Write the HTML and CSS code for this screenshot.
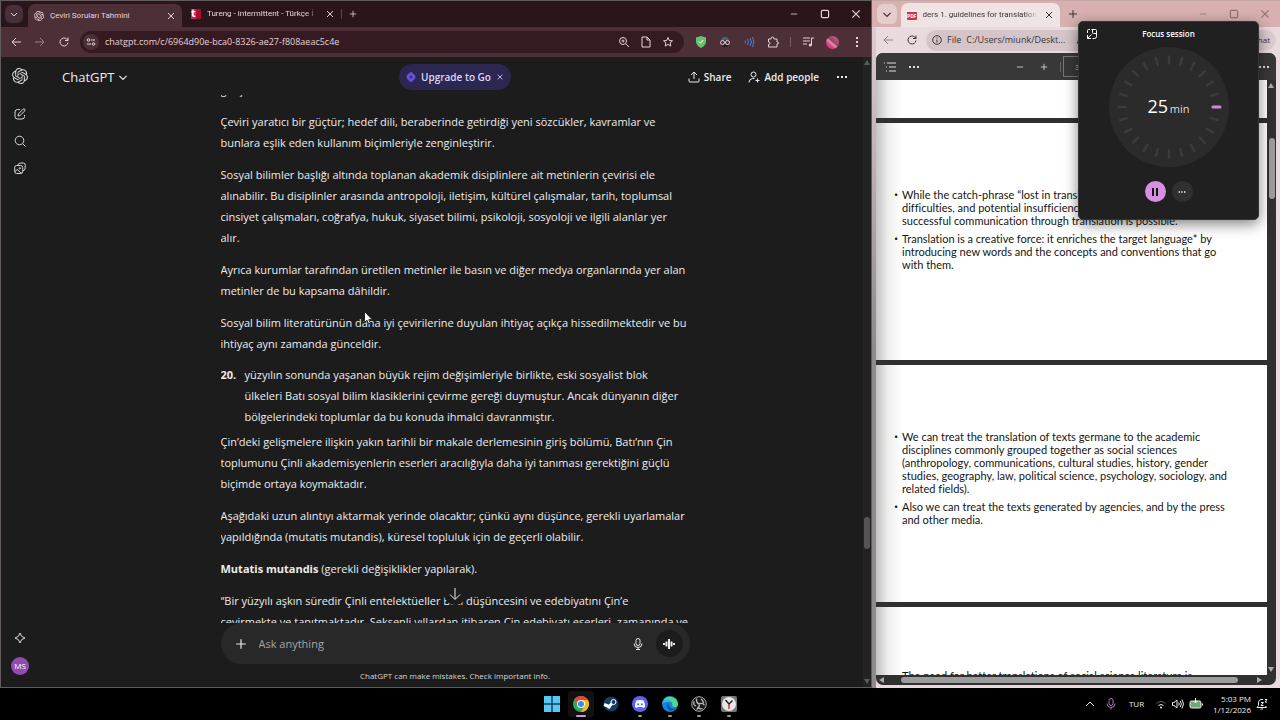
FILE: index.html
```html
<!DOCTYPE html>
<html lang="tr">
<head>
    <meta charset="UTF-8">
    <meta name="viewport" content="width=device-width, initial-scale=1.0">
    <title>Çeviri Soruları Tahmini</title>
    <link rel="stylesheet" href="styles.css">
</head>
<body>
    <svg class="sprite" aria-hidden="true">
        <symbol id="openai" viewBox="0 0 24 24">
            <path fill="currentColor" d="M22.2819 9.8211a5.9847 5.9847 0 0 0-.5157-4.9108 6.0462 6.0462 0 0 0-6.5098-2.9A6.0651 6.0651 0 0 0 4.9807 4.1818a5.9847 5.9847 0 0 0-3.9977 2.9 6.0462 6.0462 0 0 0 .7427 7.0966 5.98 5.98 0 0 0 .511 4.9107 6.051 6.051 0 0 0 6.5146 2.9001A5.9847 5.9847 0 0 0 13.2599 24a6.0557 6.0557 0 0 0 5.7718-4.2058 5.9894 5.9894 0 0 0 3.9977-2.9001 6.0557 6.0557 0 0 0-.7475-7.0729zm-9.022 12.6081a4.4755 4.4755 0 0 1-2.8764-1.0408l.1419-.0804 4.7783-2.7582a.7948.7948 0 0 0 .3927-.6813v-6.7369l2.02 1.1686a.071.071 0 0 1 .038.052v5.5826a4.504 4.504 0 0 1-4.4945 4.4944zm-9.6607-4.1254a4.4708 4.4708 0 0 1-.5346-3.0137l.142.0852 4.783 2.7582a.7712.7712 0 0 0 .7806 0l5.8428-3.3685v2.3324a.0804.0804 0 0 1-.0332.0615L9.74 19.9502a4.4992 4.4992 0 0 1-6.1408-1.6464zM2.3408 7.8956a4.485 4.485 0 0 1 2.3655-1.9728V11.6a.7664.7664 0 0 0 .3879.6765l5.8144 3.3543-2.0201 1.1685a.0757.0757 0 0 1-.071 0l-4.8303-2.7865A4.504 4.504 0 0 1 2.3408 7.872zm16.5963 3.8558L13.1038 8.364 15.1192 7.2a.0757.0757 0 0 1 .071 0l4.8303 2.7913a4.4944 4.4944 0 0 1-.6765 8.1042v-5.6772a.79.79 0 0 0-.407-.667zm2.0107-3.0231l-.142-.0852-4.7735-2.7818a.7759.7759 0 0 0-.7854 0L9.409 9.2297V6.8974a.0662.0662 0 0 1 .0284-.0615l4.8303-2.7866a4.4992 4.4992 0 0 1 6.6802 4.66zM8.3065 12.863l-2.02-1.1638a.0804.0804 0 0 1-.038-.0567V6.0742a4.4992 4.4992 0 0 1 7.3757-3.4537l-.142.0805L8.704 5.459a.7948.7948 0 0 0-.3927.6813zm1.0976-2.3654l2.602-1.4998 2.6069 1.4998v2.9994l-2.5974 1.4997-2.6067-1.4997Z"/>
        </symbol>
        <symbol id="x" viewBox="0 0 10 10"><path d="M2 2l6 6M8 2l-6 6"/></symbol>
        <symbol id="plus" viewBox="0 0 10 10"><path d="M5 1v8M1 5h8"/></symbol>
        <symbol id="minus" viewBox="0 0 10 10"><path d="M1 5h8"/></symbol>
        <symbol id="square" viewBox="0 0 10 10"><rect x="2" y="2" width="6" height="6" rx="1"/></symbol>
        <symbol id="down" viewBox="0 0 10 10"><path d="M2 4l3 3 3-3"/></symbol>
        <symbol id="back" viewBox="0 0 12 12"><path d="M11 6H2M6 2L2 6l4 4"/></symbol>
        <symbol id="reload" viewBox="0 0 12 12"><path d="M10 6.500a4 4 0 1 1-1.200-3.400L10 4.300M10 1.500v3H7"/></symbol>
        <symbol id="dots" viewBox="0 0 12 12"><path class="solid" d="M1 5h2v2H1zM5 5h2v2H5zM9 5h2v2H9z"/></symbol>
    </svg>

    <main class="desktop">
        <section class="window chrome">
            <div class="tabs">
                <button class="tab-search" aria-label="Search tabs"><svg class="icon s10"><use href="#down"/></svg></button>
                <div class="tab active">
                    <svg class="icon s10"><use href="#openai"/></svg>
                    <span class="tab-title">Çeviri Soruları Tahmini</span>
                    <button aria-label="Close tab"><svg class="icon s10"><use href="#x"/></svg></button>
                </div>
                <div class="tab second">
                    <span class="tureng">t</span>
                    <span class="tab-title faded">Tureng - intermittent - Türkçe İ</span>
                    <button aria-label="Close tab"><svg class="icon s10"><use href="#x"/></svg></button>
                </div>
                <button class="new-tab" aria-label="New tab"><svg class="icon s8"><use href="#plus"/></svg></button>
                <div class="window-buttons">
                    <button aria-label="Minimize"><svg class="icon s8"><use href="#minus"/></svg></button>
                    <button aria-label="Maximize"><svg class="icon s12"><use href="#square"/></svg></button>
                    <button aria-label="Close"><svg class="icon s12"><use href="#x"/></svg></button>
                </div>
            </div>
            <div class="toolbar">
                <button aria-label="Back"><svg class="icon s12"><use href="#back"/></svg></button>
                <button class="forward" aria-label="Forward"><svg class="icon s12" viewBox="0 0 12 12"><path d="M1 6h9M6 2l4 4-4 4"/></svg></button>
                <button aria-label="Reload"><svg class="icon s12"><use href="#reload"/></svg></button>
                <div class="address">
                    <button class="site-info" aria-label="Site information">
                        <svg class="icon s10" viewBox="0 0 10 10"><circle cx="2.500" cy="3" r="1.300"/><path d="M5 3h4M1 7h4"/><circle cx="7.500" cy="7" r="1.300"/></svg>
                    </button>
                    <input type="text" aria-label="Address" value="chatgpt.com/c/6964d90e-bca0-8326-ae27-f808aeac5c4e">
                    <button aria-label="Zoom"><svg class="icon s12" viewBox="0 0 12 12"><circle cx="5" cy="5" r="3.500"/><path d="M8 8l3 3M5 3.500v3M3.500 5h3"/></svg></button>
                    <button aria-label="Page"><svg class="icon s12" viewBox="0 0 12 12"><path d="M2 1h5l3 3v7H2zM7 1v3h3"/></svg></button>
                    <button aria-label="Bookmark"><svg class="icon s12" viewBox="0 0 12 12"><path d="M6 1.500l1.300 3 3.200.300-2.400 2.100.700 3.200L6 8.400l-2.800 1.700.700-3.200-2.400-2.100 3.200-.300z"/></svg></button>
                </div>
                <div class="extensions">
                    <svg class="icon s12" viewBox="0 0 12 12"><path class="shield" d="M6 0l5 1.500v4C11 9 8 11 6 12 4 11 1 9 1 5.500v-4z"/><path class="tick" d="M4 5.500l1.500 1.600L8.200 4"/></svg>
                    <svg class="icon s12" viewBox="0 0 12 12"><path class="hat" d="M2 4l2-3h4l2 3z"/><circle cx="3.500" cy="6.500" r="2"/><circle cx="8.500" cy="6.500" r="2"/><path class="beard" d="M3 9h6l-1 2H4z"/></svg>
                    <svg class="icon s12 blue" viewBox="0 0 12 12"><path d="M2 4.500q1 1.500 0 3M4.500 3q2 3 0 6M7 2q3 4 0 8M9.500 1q3 5 0 10"/></svg>
                    <svg class="icon s12" viewBox="0 0 12 12"><path d="M1.500 3H4q0-2 1.500-2T7 3h3v3q1.500 0 1.500 1T10 8v3H1.500V8.500q1.500 0 1.500-1.300T1.500 6z"/></svg>
                    <i class="divider"></i>
                    <svg class="icon s12" viewBox="0 0 12 12"><path d="M1 2h7M1 5h7M1 8h4M9.500 2v7M9.500 2H12"/><circle class="solid" cx="8.300" cy="9" r="1.500"/></svg>
                    <span class="chrome-avatar"></span>
                    <svg class="icon s12" viewBox="0 0 12 12"><path class="solid" d="M5 1h2v2H5zM5 5h2v2H5zM5 9h2v2H5z"/></svg>
                </div>
            </div>

            <div class="chat">
                <nav class="rail">
                    <a href="#" aria-label="Home"><svg class="icon s16"><use href="#openai"/></svg></a>
                    <a class="rail-first" href="#" aria-label="New chat"><svg class="icon s12" viewBox="0 0 12 12"><path d="M6 1.500H3.500Q1 1.500 1 4v4.500Q1 11 3.500 11H8q2.500 0 2.500-2.500V7M4 8l.500-2.200L9 1.200q1-.700 1.700 0 .700.800 0 1.700L6.200 7.500z"/></svg></a>
                    <a href="#" aria-label="Search chats"><svg class="icon s12" viewBox="0 0 12 12"><circle cx="5.500" cy="5.500" r="4.300"/><path d="M8.700 8.700l2.800 2.800"/></svg></a>
                    <a href="#" aria-label="Images"><svg class="icon s12" viewBox="0 0 12 12"><rect x=".700" y="3.500" width="8" height="8" rx="2"/><path d="M4 3.500V3q.300-2 2.500-2L9.300 1q2.200.200 2 2.500L11 7q-.300 1.500-2 1.700M1 9.500l2.200-2 4.500 4"/><circle cx="5.800" cy="6.300" r=".700"/></svg></a>
                    <a class="sparkle" href="#" aria-label="Upgrade"><svg class="icon s12" viewBox="0 0 12 12"><path d="M6 1q.800 4.200 5 5-4.200.800-5 5-.800-4.200-5-5 4.200-.800 5-5z"/></svg></a>
                    <a class="avatar" href="#">MS</a>
                </nav>

                <div class="conversation">
                    <header class="chat-header">
                        <button class="model">ChatGPT <svg class="icon s12"><use href="#down"/></svg></button>
                        <button class="upgrade">
                            <svg class="icon s10" viewBox="0 0 10 10"><path class="gem" d="M5 0q1 0 4 3.500 1 1.500 0 3Q6 10 5 10T1 6.500q-1-1.500 0-3Q4 0 5 0z"/><circle class="gem-core" cx="5" cy="5" r="1.500"/></svg>
                            Upgrade to Go
                            <svg class="icon s8"><use href="#x"/></svg>
                        </button>
                        <div class="chat-actions">
                            <button><svg class="icon s12" viewBox="0 0 12 12"><path d="M6 8V1M3 4l3-3 3 3M1 7.500V10q0 1 1 1h8q1 0 1-1V7.500"/></svg>Share</button>
                            <button><svg class="icon s12" viewBox="0 0 12 12"><circle cx="5.500" cy="3.500" r="2.500"/><path d="M1 11.500q0-3.500 3.500-4h2M9.500 7.500v4M7.500 9.500h4"/></svg>Add people</button>
                            <button aria-label="More"><svg class="icon s12"><use href="#dots"/></svg></button>
                        </div>
                    </header>

                    <div class="thread">
                        <article class="message">
                            <p>geliş</p>
                            <p>Çeviri yaratıcı bir güçtür; hedef dili, beraberinde getirdiği yeni sözcükler, kavramlar ve<br>bunlara eşlik eden kullanım biçimleriyle zenginleştirir.</p>
                            <p>Sosyal bilimler başlığı altında toplanan akademik disiplinlere ait metinlerin çevirisi ele<br>alınabilir. Bu disiplinler arasında antropoloji, iletişim, kültürel çalışmalar, tarih, toplumsal<br>cinsiyet çalışmaları, coğrafya, hukuk, siyaset bilimi, psikoloji, sosyoloji ve ilgili alanlar yer<br>alır.</p>
                            <p>Ayrıca kurumlar tarafından üretilen metinler ile basın ve diğer medya organlarında yer alan<br>metinler de bu kapsama dâhildir.</p>
                            <p>Sosyal bilim literatürünün daha iyi çevirilerine duyulan ihtiyaç açıkça hissedilmektedir ve bu<br>ihtiyaç aynı zamanda günceldir.</p>
                            <ol>
                                <li><b>20.</b><span>yüzyılın sonunda yaşanan büyük rejim değişimleriyle birlikte, eski sosyalist blok<br>ülkeleri Batı sosyal bilim klasiklerini çevirme gereği duymuştur. Ancak dünyanın diğer<br>bölgelerindeki toplumlar da bu konuda ihmalci davranmıştır.</span></li>
                            </ol>
                            <p>Çin’deki gelişmelere ilişkin yakın tarihli bir makale derlemesinin giriş bölümü, Batı’nın Çin<br>toplumunu Çinli akademisyenlerin eserleri aracılığıyla daha iyi tanıması gerektiğini güçlü<br>biçimde ortaya koymaktadır.</p>
                            <p>Aşağıdaki uzun alıntıyı aktarmak yerinde olacaktır; çünkü aynı düşünce, gerekli uyarlamalar<br>yapıldığında (mutatis mutandis), küresel topluluk için de geçerli olabilir.</p>
                            <p><b>Mutatis mutandis</b> (gerekli değişiklikler yapılarak).</p>
                            <p>“Bir yüzyılı aşkın süredir Çinli entelektüeller Batı düşüncesini ve edebiyatını Çin’e<br>çevirmekte ve tanıtmaktadır. Seksenli yıllardan itibaren Çin edebiyatı eserleri, zamanında ve</p>
                        </article>
                        <button class="to-bottom" aria-label="Scroll to bottom"><svg class="icon s12" viewBox="0 0 12 12"><path d="M6 0v11M1 6.500l5 5 5-5"/></svg></button>
                    </div>

                    <form class="composer">
                        <button type="button" aria-label="Attach"><svg class="icon s12"><use href="#plus"/></svg></button>
                        <input type="text" placeholder="Ask anything" aria-label="Ask anything">
                        <button type="button" aria-label="Dictate"><svg class="icon s12" viewBox="0 0 12 12"><rect x="4" y="0.500" width="4" height="7" rx="2"/><path d="M2 5.500q0 4 4 4t4-4M6 9.500v2M4 11.500h4"/></svg></button>
                        <button type="button" class="voice" aria-label="Voice mode"><svg class="icon s12 thick" viewBox="0 0 12 12"><path d="M1 5v2M3.500 3.500v5M6 1v10M8.500 3.500v5M11 5v2"/></svg></button>
                    </form>
                    <p class="disclaimer">ChatGPT can make mistakes. Check important info.</p>
                </div>
                <div class="chat-scroll"><i class="arrow-up"></i><i class="thumb"></i><i class="arrow-down"></i></div>
            </div>
        </section>

        <section class="window edge" lang="en">
            <div class="tabs">
                <button class="tab-search" aria-label="Tab actions"><svg class="icon s12"><use href="#down"/></svg></button>
                <div class="tab active">
                    <span class="pdf-icon">PDF</span>
                    <span class="tab-title faded">ders 1. guidelines for translation of</span>
                    <button aria-label="Close tab"><svg class="icon s10"><use href="#x"/></svg></button>
                </div>
                <button class="new-tab" aria-label="New tab"><svg class="icon s10"><use href="#plus"/></svg></button>
                <div class="window-buttons">
                    <button aria-label="Minimize"><svg class="icon s8"><use href="#minus"/></svg></button>
                    <button aria-label="Maximize"><svg class="icon s12"><use href="#square"/></svg></button>
                    <button aria-label="Close"><svg class="icon s12"><use href="#x"/></svg></button>
                </div>
            </div>
            <div class="toolbar">
                <button class="forward" aria-label="Back"><svg class="icon s12"><use href="#back"/></svg></button>
                <button aria-label="Reload"><svg class="icon s12"><use href="#reload"/></svg></button>
                <div class="address">
                    <svg class="icon s10" viewBox="0 0 10 10"><circle cx="5" cy="5" r="4.300"/><path d="M5 4.500v3M5 2.500v1"/></svg>
                    <span>File</span>
                    <input type="text" aria-label="Address" value="C:/Users/miunk/Deskt...">
                    <svg class="icon s12" viewBox="0 0 12 12"><path d="M2 9q1.500-1 1.500-4Q4 1.500 7 1.500T10.500 5M2 9h5"/></svg>
                </div>
                <button class="copilot">Chat</button>
            </div>
            <div class="pdf-viewer">
                <div class="pdf-bar">
                    <button aria-label="Contents"><svg class="icon s12" viewBox="0 0 12 12"><path d="M0 2h1M3 2h9M2 6h1M5 6h7M2 10h1M5 10h7"/></svg></button>
                    <button aria-label="More"><svg class="icon s12"><use href="#dots"/></svg></button>
                    <button class="zoom-out" aria-label="Zoom out"><svg class="icon s8"><use href="#minus"/></svg></button>
                    <button aria-label="Zoom in"><svg class="icon s8"><use href="#plus"/></svg></button>
                    <i class="divider"></i>
                    <input type="text" class="page-number" aria-label="Page" value="3">
                    <button class="bar-more" aria-label="Settings"><svg class="icon s12"><use href="#dots"/></svg></button>
                </div>
                <div class="pdf-body">
                    <div class="pages">
                        <div class="page"></div>
                        <div class="page">
                            <ul>
                                <li>While the catch-phrase “lost in translation” reflects the<br>difficulties, and potential insufficiencies of translation,<br>successful communication through translation is possible.</li>
                                <li>Translation is a creative force: it enriches the target language* by<br>introducing new words and the concepts and conventions that go<br>with them.</li>
                            </ul>
                        </div>
                        <div class="page">
                            <ul>
                                <li>We can treat the translation of texts germane to the academic<br>disciplines commonly grouped together as social sciences<br>(anthropology, communications, cultural studies, history, gender<br>studies, geography, law, political science, psychology, sociology, and<br>related fields).</li>
                                <li>Also we can treat the texts generated by agencies, and by the press<br>and other media.</li>
                            </ul>
                        </div>
                        <div class="page">
                            <ul>
                                <li class="plain">The need for better translations of social science literature is</li>
                            </ul>
                        </div>
                    </div>
                    <div class="v-scroll"><i class="arrow-up"></i><i class="thumb"></i><i class="arrow-down"></i></div>
                </div>
                <div class="h-scroll"><i class="arrow-left"></i><i class="thumb"></i><i class="arrow-right"></i></div>
            </div>
        </section>

        <aside class="focus" lang="en">
            <button class="shrink" aria-label="Back to full view"><svg class="icon s12" viewBox="0 0 12 12"><path d="M4 1.500H2.500q-1 0-1 1V5M5.500 1.500h4q1 0 1 1v6q0 2-2 2h-2M6.500 1.500v3q0 1 1 1h3M5.500 6.500l-4 4M1.500 7v3.500H5"/></svg></button>
            <h2>Focus session</h2>
            <div class="dial">
                <svg class="dial-ring" viewBox="0 0 120 120">
                    <circle class="face" cx="60" cy="60" r="60"/>
                    <circle class="ticks" cx="60" cy="60" r="47" pathLength="360"/>
                    <path class="hand" d="M104 60h7"/>
                </svg>
                <p><b>25</b> min</p>
            </div>
            <div class="focus-buttons">
                <button class="pause" aria-label="Pause"><svg class="icon s10" viewBox="0 0 10 10"><path class="solid" d="M2 1h2v8H2zM6 1h2v8H6z"/></svg></button>
                <button aria-label="More options"><svg class="icon s8" viewBox="0 0 12 12"><use href="#dots"/></svg></button>
            </div>
        </aside>
    </main>

    <footer class="taskbar" lang="en">
        <div class="apps">
            <button aria-label="Start"><svg viewBox="0 0 16 16"><path fill="#55c8f7" d="M0 0h7.500v7.500H0zM8.500 0H16v7.500H8.500zM0 8.500h7.500V16H0zM8.500 8.500H16V16H8.500z"/></svg></button>
            <button class="current" aria-label="Chrome"><svg viewBox="0 0 16 16"><circle cx="8" cy="8" r="8" fill="#34a853"/><path fill="#ea4335" d="M8 8L1.100 4A8 8 0 0 1 14.900 4z"/><path fill="#fbbc05" d="M8 4h6.900A8 8 0 0 1 8 16l3.500-6z"/><circle cx="8" cy="8" r="4" fill="#fff"/><circle cx="8" cy="8" r="3" fill="#4285f4"/></svg></button>
            <button aria-label="Steam"><svg viewBox="0 0 16 16"><circle cx="8" cy="8" r="7.500" fill="#153c63"/><path fill="none" stroke="#fff" stroke-width="3" d="M1 8.500l5 2 4-4"/><circle cx="10.500" cy="6" r="2.500" fill="#153c63" stroke="#fff"/><circle cx="6" cy="11" r="1.700" fill="#fff"/></svg></button>
            <button class="open" aria-label="Discord"><svg viewBox="0 0 16 16"><circle cx="8" cy="8" r="8" fill="#5865f2"/><path fill="#fff" d="M4.500 4.500q3.500-1 7 0Q13.500 8 13 11l-2 1-1-1.300q-2 .500-4 0L5 12l-2-1q-.500-3 1.500-6.500z"/><circle cx="6.200" cy="8.300" r="1.100" fill="#5865f2"/><circle cx="9.800" cy="8.300" r="1.100" fill="#5865f2"/></svg></button>
            <button class="open" aria-label="Edge"><svg viewBox="0 0 16 16"><circle cx="8" cy="8" r="8" fill="#1684d8"/><path fill="#4fd88b" d="M1 5a8 8 0 0 1 15 3q0 3.500-4 3-2.500-.300-1.500-2Q10 4 5 4 2.500 4 1 5z"/><path fill="#35b8e0" d="M0 8q1-5 6-4.500Q10 4 10.500 7 5 4 0 8z"/><path fill="#0c4f9e" d="M6 7q-2.500 5 2 7.500 3.500.500 6-2Q7 14 6 7z"/></svg></button>
            <button class="open" aria-label="OBS Studio"><svg viewBox="0 0 16 16"><circle cx="8" cy="8" r="7.300" fill="#1b1b1d" stroke="#aaa"/><g fill="none" stroke="#bbb" stroke-width="1.300"><path d="M5.500 2.500q-.500 4 2.500 5.500M13.500 9q-3-2.500-5.500-1M5.500 13.500Q9 11.500 8 8M3 5.500Q2 9 5 10M10 3q3 2 2 5M11.500 12.500q-3 1-5-1.500"/></g></svg></button>
            <button class="open" aria-label="Clock"><svg viewBox="0 0 16 16"><rect width="16" height="16" rx="2" fill="#777"/><circle cx="8" cy="8" r="7" fill="#e8e8e8"/><path fill="none" stroke="#222" stroke-width="1.500" d="M4.500 4L8 8l3.500-3.500"/><path stroke="#c3342f" stroke-width="1.500" d="M8 8v5"/></svg></button>
        </div>
        <div class="tray">
            <svg class="icon s12" viewBox="0 0 12 12"><path d="M2 8l4-4 4 4"/></svg>
            <svg class="icon s12 mic" viewBox="0 0 12 12"><rect x="4" y="0.500" width="4" height="7" rx="2"/><path d="M2 5.500q0 4 4 4t4-4M6 9.500v2"/></svg>
            <span class="lang">TUR</span>
            <span class="status">
                <svg class="icon s12" viewBox="0 0 12 12"><path class="dim" d="M1.500 5.500q4.500-4 9 0"/><path d="M3.500 7.500q2.500-2 5 0"/><circle class="solid" cx="6" cy="9.500" r="1"/></svg>
                <svg class="icon s12" viewBox="0 0 12 12"><path d="M.500 4.500H2L5 2v8L2 7.500H.500zM6.700 4.500q1 1.500 0 3M8.300 3q2 3 0 6M10 1.500q3 4.500 0 9"/></svg>
                <svg class="icon battery" viewBox="0 0 14 12"><rect x="1" y="3" width="11" height="7" rx="1.500"/><path d="M13.500 5.500v2M6.500 0v5M4.500 3l2 2 2-2"/></svg>
            </span>
            <span class="clock">5:03 PM<br>1/12/2026</span>
            <svg class="icon s12" viewBox="0 0 12 12"><path d="M7 1.500Q2.500 1 2.500 5v2.500L1 9.500h9.500L9.500 8M4.500 11h2.500M5 4.500h2.500L5 7.500h2.500M9 1.500h2L9 4h2"/></svg>
        </div>
    </footer>

    <svg class="cursor" viewBox="0 0 10 14" aria-hidden="true"><path d="M.500.500v11l2.500-2.200 1.600 3.700 1.800-.800-1.600-3.500h3.500z"/></svg>
</body>
</html>
```

FILE: styles.css
```css
* {
    box-sizing: border-box;
    padding: 0;
    margin: 0;
}

body {
    display: flex;
    flex-direction: column;
    height: 100vh;
    overflow: hidden;
    background-color: #000;
    font-family: "Open Sans", "Noto Sans", sans-serif;
    font-size: 8px;
    line-height: 14px;
    white-space: nowrap;
}

button,
input {
    border: 0;
    outline: 0;
    background: none;
    color: inherit;
    font: inherit;
}

button {
    display: inline-flex;
    align-items: center;
    justify-content: center;
    flex-shrink: 0;
}

input {
    flex: 1;
    min-width: 0;
}

a {
    display: flex;
    color: inherit;
    text-decoration: none;
}

ul,
ol {
    list-style: none;
}

.sprite {
    position: absolute;
    width: 0;
    height: 0;
}

.icon {
    flex-shrink: 0;
    fill: none;
    stroke: currentColor;
    stroke-width: 1;
}

.s8 { width: 8px; height: 8px; }
.s10 { width: 10px; height: 10px; }
.s12 { width: 12px; height: 12px; }
.s16 { width: 16px; height: 16px; }

.icon use[href="#openai"] {
    stroke: none;
}

.solid {
    fill: currentColor;
    stroke: none;
}

.thick {
    stroke-width: 2;
}

/* windows */

.desktop {
    position: relative;
    flex: 1;
    min-height: 0;
    display: grid;
    grid-template-columns: 109fr 51fr;
}

.window {
    display: flex;
    flex-direction: column;
    min-width: 0;
    min-height: 0;
    overflow: hidden;
}

.tabs {
    display: flex;
    align-items: center;
    height: 26px;
    padding-left: 4px;
    flex-shrink: 0;
}

.tab-search {
    width: 18px;
    height: 18px;
    border-radius: 6px;
}

.tab {
    display: flex;
    align-items: center;
    gap: 6px;
    padding: 0 6px;
}

.tab-title {
    flex: 1;
    overflow: hidden;
    font-family: Roboto, sans-serif;
}

.faded {
    -webkit-mask-image: linear-gradient(90deg, #000 88%, transparent);
    mask-image: linear-gradient(90deg, #000 88%, transparent);
}

.window-buttons {
    display: flex;
    margin-left: auto;
}

.window-buttons button {
    width: 31px;
    height: 24px;
}

.toolbar {
    display: flex;
    align-items: center;
    flex-shrink: 0;
}

.toolbar > button {
    width: 24px;
    height: 24px;
}

.forward {
    opacity: 0.5;
}

.address {
    display: flex;
    align-items: center;
    min-width: 0;
    font-size: 9px;
}

.divider {
    width: 1px;
    height: 10px;
    background-color: #7c5a63;
}

/* chrome */

.chrome {
    border: 1px solid #625c5e;
    background-color: #1c1c1d;
    color: #e6d3d7;
}

.chrome .tabs {
    background-color: #2a151a;
}

.chrome .tab-search {
    margin-right: 5px;
    background-color: #47303a;
}

.chrome .tab.active {
    align-self: flex-end;
    width: 154px;
    height: 23px;
    border-radius: 7px 7px 0 0;
    background-color: #4d2f37;
}

.second {
    width: 159px;
    padding-left: 9px;
}

.tureng {
    width: 10px;
    height: 10px;
    background: linear-gradient(90deg, #d92141 50%, #a80d30 50%);
    color: #fff;
    font-size: 11px;
    font-weight: bold;
    line-height: 8px;
}

.chrome .new-tab {
    width: 22px;
    height: 10px;
    border-left: 1px solid #5f434b;
}

.chrome .toolbar {
    height: 30px;
    padding: 0 3px;
    background-color: #4d2f37;
}

.chrome .address {
    flex: 1;
    height: 22px;
    gap: 10px;
    margin-left: 4px;
    padding: 0 10px 0 3px;
    border-radius: 11px;
    background-color: #351a21;
}

.chrome .address input {
    margin-left: -4px;
}

.site-info {
    width: 16px;
    height: 16px;
    border-radius: 8px;
    background-color: #4d2f37;
}

.extensions {
    display: flex;
    align-items: center;
    gap: 12px;
    padding: 0 5px 0 11px;
}

.extensions .divider {
    margin: 0 -1px;
}

.extensions .shield { fill: #67c26b; stroke: none; }
.extensions .tick { stroke: #fff; }
.hat { fill: #3b6a78; stroke: none; }
.beard { fill: #222; stroke: none; }
.blue { color: #4b83d8; }

.chrome-avatar {
    width: 13px;
    height: 13px;
    border-radius: 50%;
    background: linear-gradient(40deg, #d3457f 30%, #e593a8 45%, #8e4562 55%, #c65580 80%);
}

/* chat */

.chat {
    position: relative;
    display: flex;
    flex: 1;
    min-height: 0;
    color: #ececec;
}

.rail {
    display: flex;
    flex-direction: column;
    align-items: center;
    gap: 15px;
    width: 38px;
    padding: 11px 0 12px;
    color: #d8d8d8;
}

.rail-first {
    margin-top: 9px;
}

.sparkle {
    margin-top: auto;
}

.avatar {
    align-items: center;
    justify-content: center;
    width: 18px;
    height: 18px;
    margin-top: -2px;
    border-radius: 50%;
    background-color: #924bb0;
    color: #fff;
}

.conversation {
    display: flex;
    flex: 1;
    flex-direction: column;
    align-items: center;
    min-width: 0;
}

.chat-header {
    display: grid;
    grid-template-columns: 1fr auto 1fr;
    align-items: center;
    align-self: stretch;
    height: 38px;
    padding: 2px 23px 0;
    flex-shrink: 0;
    font-size: 10px;
    font-weight: 600;
}

.model {
    justify-self: start;
    gap: 3px;
    font-size: 13px;
    font-weight: normal;
}

.upgrade {
    height: 26px;
    gap: 5px;
    padding: 0 7px;
    border-radius: 13px;
    background-color: #2c2750;
    color: #dcd9f7;
}

.gem {
    fill: #6a50d8;
    stroke: none;
}

.gem-core {
    fill: #3d2b96;
    stroke: none;
}

.chat-actions {
    display: flex;
    justify-content: flex-end;
    gap: 17px;
}

.chat-actions button {
    gap: 4px;
}

.thread {
    position: relative;
    flex: 1;
    width: 469px;
    min-height: 0;
    overflow: hidden;
}

/* scrolled up under the header */
.message {
    display: flex;
    flex-direction: column;
    gap: 11px;
    margin-top: -16px;
    font-size: 11px;
    line-height: 21px;
}

.message ol {
    margin: -1px 0 -7px;
}

.message li {
    display: grid;
    grid-template-columns: 24px 1fr;
}

.to-bottom {
    position: absolute;
    bottom: 18px;
    left: 50%;
    width: 22px;
    height: 22px;
    margin-left: -11px;
    border-radius: 50%;
    background-color: #1c1c1d;
}

.composer {
    display: flex;
    align-items: center;
    width: 469px;
    height: 41px;
    gap: 12px;
    padding: 0 7px 0 14px;
    border-radius: 21px;
    background-color: #282829;
    flex-shrink: 0;
    font-size: 11px;
}

.composer input::placeholder {
    color: #a5a5a5;
}

.voice {
    width: 27px;
    height: 27px;
    border-radius: 50%;
    background-color: #1c1c1d;
}

.disclaimer {
    padding: 5px 0 4px;
    color: #d5d5d5;
}

.chat-scroll {
    position: absolute;
    top: 0;
    right: 0;
    bottom: 0;
    width: 8px;
    background-color: #222223;
}

.thumb {
    position: absolute;
    border-radius: 4px;
    background-color: #9c9c9c;
}

.chat-scroll .thumb {
    top: 73%;
    left: 1px;
    width: 6px;
    height: 32px;
    background-color: #555;
}

.arrow-up,
.arrow-down,
.arrow-left,
.arrow-right {
    position: absolute;
    border: 3px solid transparent;
    color: #aaa;
}

.chat-scroll i { color: #5a5a5a; }
.arrow-up { top: 3px; left: 1px; border-bottom: 5px solid; border-top: 0; }
.arrow-down { bottom: 3px; left: 1px; border-top: 5px solid; border-bottom: 0; }
.arrow-left { left: 3px; top: 2px; border-right: 5px solid; border-left: 0; }
.arrow-right { right: 14px; top: 2px; border-left: 5px solid; border-right: 0; }

/* edge */

.edge {
    border-top: 1px solid #c5a5a5;
    padding: 0 4px 3px;
    background: #e9dadd linear-gradient(#e3d2d5, #8f8b8c 50%) left / 4px 100% no-repeat;
    color: #3b3235;
}

.edge .tabs {
    margin: 0 -4px;
    background-color: #d7b0af;
}

.edge .tab-search {
    width: 20px;
    height: 20px;
    margin: 0 4px 0 1px;
    background-color: #e5cccd;
}

.edge .tab.active {
    align-self: flex-end;
    width: 159px;
    height: 24px;
    border-radius: 7px 7px 0 0;
    background-color: #f0e3e4;
}

.pdf-icon {
    border-radius: 1px;
    border-top: 2px solid #eee;
    background-color: #d0313f;
    color: #fff;
    font-size: 5px;
    font-weight: bold;
    line-height: 8px;
}

.edge .new-tab {
    width: 25px;
}

.edge .window-buttons {
    color: #8f7676;
}

.edge .toolbar {
    height: 26px;
}

.edge .address {
    width: 270px;
    height: 21px;
    gap: 5px;
    margin-left: 2px;
    padding: 0 6px;
    border-radius: 11px;
    background-color: #d5c5c8;
}

.edge .address input {
    flex: 0 0 104px;
}

.edge .toolbar .copilot {
    width: 60px;
    height: 20px;
    margin-left: auto;
    border-radius: 10px;
    background-color: #ddcccf;
    justify-content: flex-end;
    padding-right: 6px;
}

.pdf-viewer {
    display: flex;
    flex: 1;
    flex-direction: column;
    min-height: 0;
    border-radius: 7px;
    overflow: hidden;
    background-color: #303030;
    color: #ddd;
}

.pdf-bar {
    display: flex;
    align-items: center;
    height: 27px;
    padding: 0 6px 0 8px;
    gap: 12px;
    flex-shrink: 0;
    background-color: #383838;
}

.zoom-out {
    margin-left: 84px;
}

.pdf-bar .zoom-out + button {
    margin-left: 4px;
}

.pdf-bar .divider {
    background-color: #666;
}

.page-number {
    flex: 0 0 30px;
    height: 21px;
    margin-left: -10px;
    padding-left: 11px;
    border: 1px solid #777;
}

.bar-more {
    margin-left: auto;
}

.pdf-body {
    display: flex;
    flex: 1;
    min-height: 0;
}

.pages {
    display: flex;
    flex: 1;
    flex-direction: column;
    gap: 5px;
    overflow: hidden;
    color: #151515;
    font-family: Lato, sans-serif;
    font-size: 11px;
    line-height: 13px;
    font-variant-ligatures: none;
}

.page {
    flex: 0 0 237px;
    padding: 65px 0 0 26px;
    background: linear-gradient(90deg, #c4c2c2, #eee 12px, #fff 26px);
}

.page:first-child {
    flex-basis: 38px;
    padding: 0;
}

.page:last-child {
    padding-top: 62px;
}

.page li {
    position: relative;
    margin-bottom: 5px;
}

.page li::before {
    content: "•";
    position: absolute;
    left: -8px;
    font-family: "Open Sans", sans-serif;
}

.page .plain::before {
    content: none;
}

.v-scroll {
    position: relative;
    width: 9px;
}

.v-scroll .thumb {
    top: 58px;
    left: 2px;
    width: 6px;
    height: 61px;
}

.h-scroll {
    position: relative;
    height: 10px;
    flex-shrink: 0;
}

.h-scroll .thumb {
    top: 2px;
    left: 25px;
    right: 38px;
    height: 6px;
}

/* focus session */

.focus {
    position: absolute;
    top: 21px;
    right: 21px;
    width: 181px;
    height: 199px;
    border: 1px solid #353535;
    border-radius: 5px;
    background-color: #202020;
    box-shadow: 0 4px 14px rgba(0, 0, 0, 0.5);
    color: #fff;
    text-align: center;
}

.focus h2 {
    padding-top: 5px;
    font-size: 8px;
    font-weight: 600;
}

.shrink {
    position: absolute;
    top: 6px;
    left: 7px;
}

.dial {
    display: grid;
    width: 120px;
    margin: 6px auto 14px;
}

.dial > * {
    grid-area: 1 / 1;
    align-self: center;
}

.face { fill: #2b2b2b; }

.ticks {
    fill: none;
    stroke: #3b3b3b;
    stroke-width: 9;
    stroke-dasharray: 3 12;
    stroke-dashoffset: 1.5;
}

.hand {
    stroke: #c78cd2;
    stroke-width: 3;
    stroke-linecap: round;
}

.dial p {
    color: #ddd;
    font-size: 11px;
    line-height: 24px;
}

.dial b {
    margin-right: -1px;
    color: #fff;
    font-size: 18px;
    font-weight: normal;
}

.focus-buttons {
    display: flex;
    justify-content: center;
    gap: 6px;
}

.focus-buttons button {
    width: 21px;
    height: 21px;
    border-radius: 50%;
    background-color: #303030;
}

.focus-buttons .pause {
    background-color: #d591e0;
    color: #111;
}

/* taskbar */

.taskbar {
    display: grid;
    grid-template-columns: 1fr auto 1fr;
    align-items: center;
    height: 32px;
    flex-shrink: 0;
    color: #eee;
}

.apps {
    grid-column: 2;
    display: flex;
    justify-content: space-between;
    width: 203px;
}

.apps button {
    position: relative;
    width: 26px;
    height: 26px;
    border-radius: 3px;
}

.apps svg {
    width: 16px;
    height: 16px;
}

.apps .current {
    background-color: #111;
}

.apps .current::after,
.apps .open::after {
    content: "";
    position: absolute;
    bottom: 0;
    width: 4px;
    height: 2px;
    border-radius: 1px;
    background-color: #999;
}

.apps .current::after {
    width: 10px;
    background-color: #d591e0;
}

.tray {
    display: flex;
    align-items: center;
    justify-content: flex-end;
    padding-right: 12px;
}

.mic {
    margin: 0 12px 0 9px;
    color: #a57bb0;
}

.status {
    display: flex;
    gap: 5px;
    margin: 0 10px 0 11px;
}

.battery {
    width: 14px;
    height: 12px;
}

.battery rect {
    fill: #6aa978;
}

.dim {
    opacity: 0.4;
}

.clock {
    margin-right: 5px;
    line-height: 11px;
    text-align: right;
}

.cursor {
    position: absolute;
    top: 311px;
    left: 364px;
    width: 10px;
    height: 14px;
    fill: #fff;
    stroke: #222;
    stroke-width: 1;
}
```
